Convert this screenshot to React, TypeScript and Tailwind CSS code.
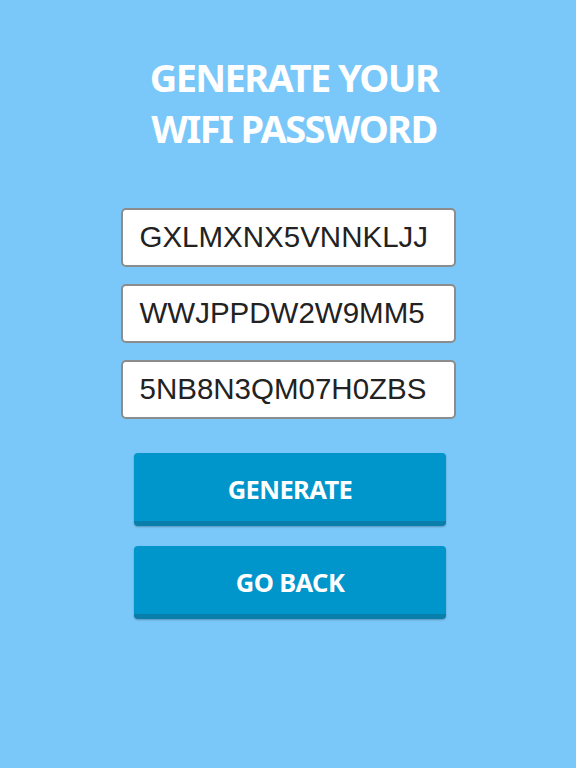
const passwords = ['GXLMXNX5VNNKLJJ', 'WWJPPDW2W9MM5', '5NB8N3QM07H0ZBS']

function ActionButton({ label }: { label: string }) {
  return (
    <button className="w-[312px] h-[73px] pt-[5px] rounded-[4px] bg-[#0096cb] border-b-[5px] border-[#0a7eab] shadow-[0_1px_2px_rgba(0,0,0,0.25)] text-white text-[25.5px] font-bold tracking-[-0.6px] [font-family:'Noto_Sans',sans-serif]">
      {label}
    </button>
  )
}

export default function App() {
  return (
    <div className="w-[576px] h-[768px] bg-[#7ac8f9] flex flex-col items-center">
      <h1 className="mt-[52px] pl-[12px] text-white text-center font-bold text-[38px] leading-[51px] tracking-[-1.6px] [font-family:'Noto_Sans',sans-serif]">
        GENERATE YOUR
        <br />
        WIFI PASSWORD
      </h1>

      <div className="mt-[54px] flex flex-col gap-[17px]">
        {passwords.map((pw) => (
          <div
            key={pw}
            className="w-[335px] h-[59px] bg-white border-2 border-[#8c8c8c] rounded-[5px] flex items-center pl-[17px] text-[#222] text-[29.5px] [font-family:'Liberation_Sans',Arial,sans-serif]"
          >
            {pw}
          </div>
        ))}
      </div>

      <div className="mt-[34px] ml-[4px] flex flex-col gap-[20px]">
        <ActionButton label="GENERATE" />
        <ActionButton label="GO BACK" />
      </div>
    </div>
  )
}
